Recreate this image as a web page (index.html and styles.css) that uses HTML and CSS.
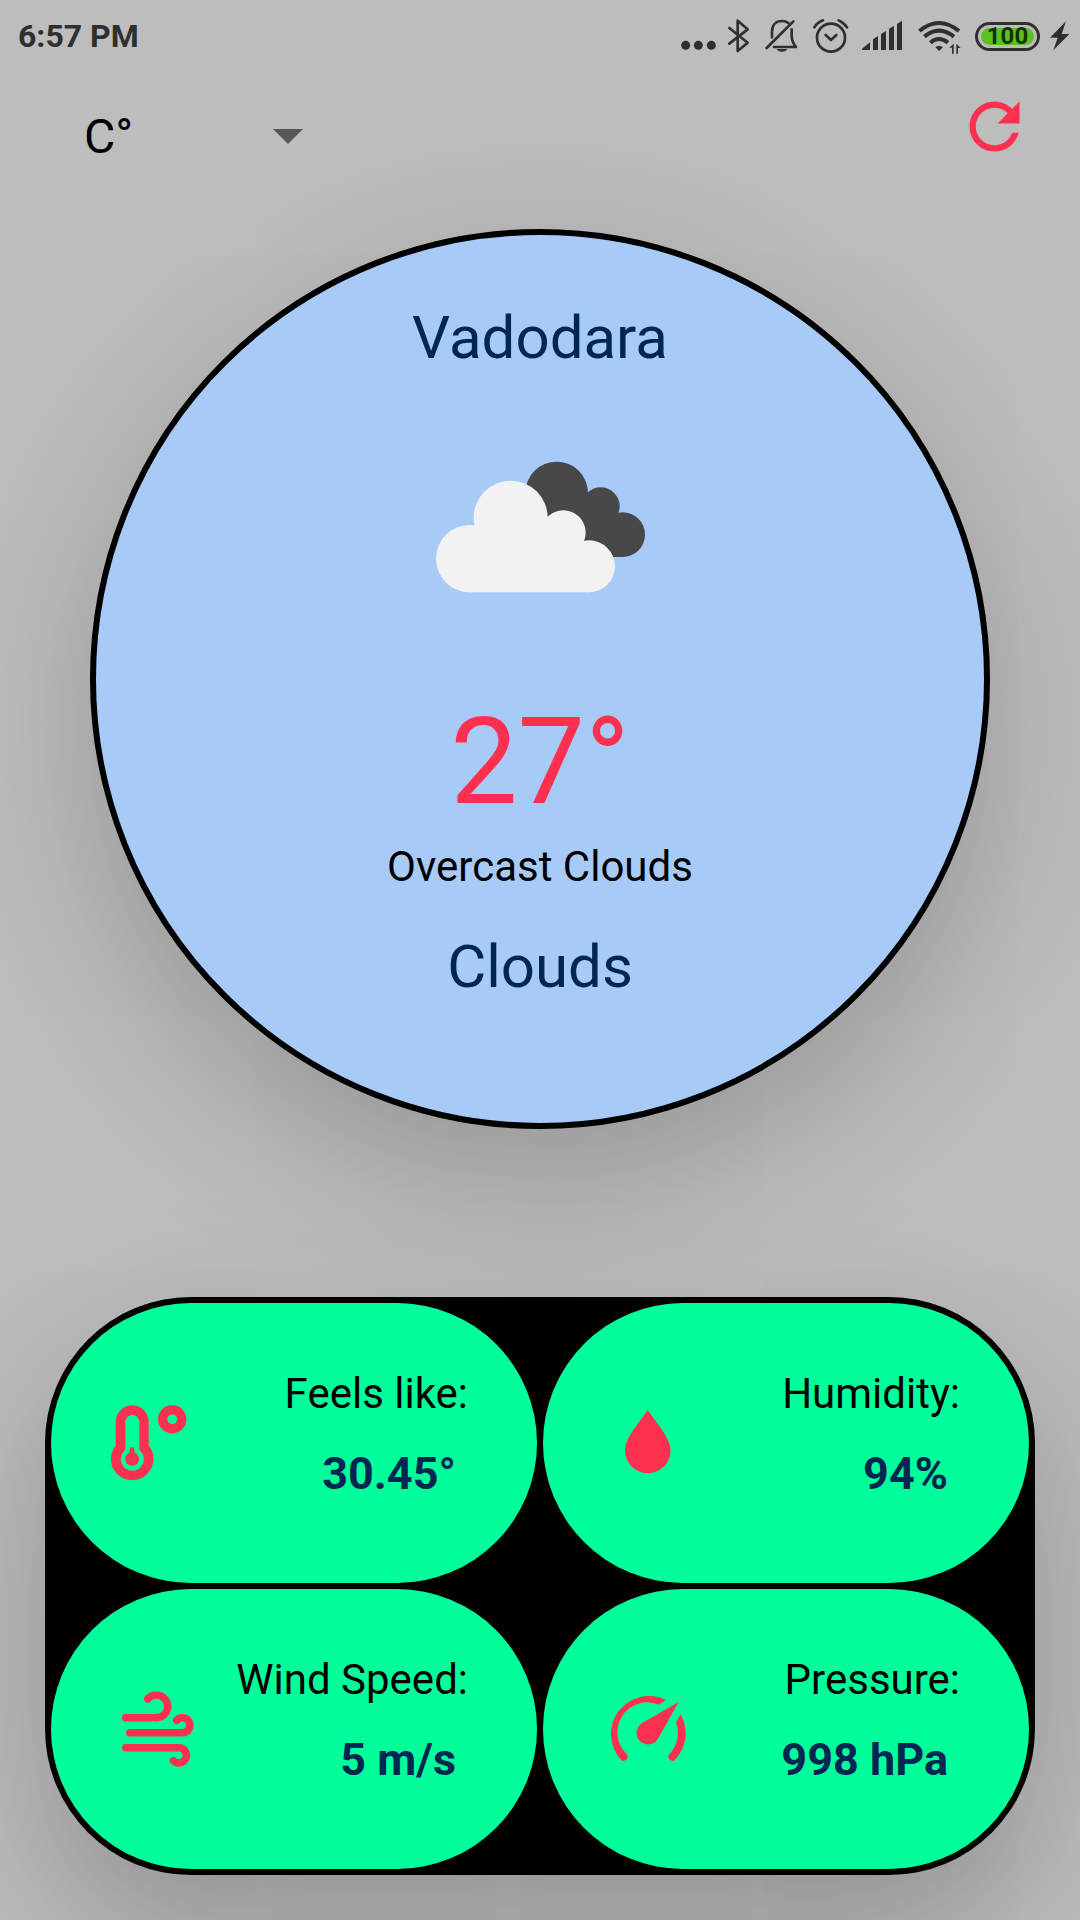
FILE: index.html
```html
<!DOCTYPE html>
<html lang="en">
<head>
<meta charset="utf-8">
<meta name="viewport" content="width=device-width, initial-scale=1">
<title>Weather</title>
<link rel="stylesheet" href="styles.css">
</head>
<body>
<header class="status-bar">
  <time class="clock">6:57 PM</time>
  <div class="status-icons">
    <svg width="42" height="40" viewBox="60 48 126 120" aria-hidden="true"><circle cx="77" cy="136" r="13.500"/><circle cx="115" cy="136" r="13.500"/><circle cx="154" cy="136" r="13.500"/></svg>
    <svg class="line" width="36" height="40" viewBox="186 48 108 120" aria-hidden="true"><path d="M208 84L263 128L233 153V62L263 88L208 131"/></svg>
    <svg class="line" width="47" height="40" viewBox="294 48 141 120" aria-hidden="true"><path d="M400 64L320 144"/><path d="M336 112V95C336 75 348 63 366 63C374 63 380 65 385 69M395 88V108C395 120 400 131 408 141H342"/><path class="solid" d="M350 147H382C378 158 354 158 350 147Z"/></svg>
    <svg class="line" width="50" height="40" viewBox="435 48 150 120" aria-hidden="true"><circle cx="513" cy="113" r="42"/><path d="M497 105L513 120L529 105M463 82Q471 69 489 61M561 82Q553 69 536 61"/></svg>
    <svg width="55" height="40" viewBox="585 48 165 120" aria-hidden="true"><path d="M606 150V146L630 127V150ZM639 150V118L654 108V150ZM663 150V102L678 93V150ZM687 150V86L702 77V150ZM711 150V72L726 62V150Z"/></svg>
    <svg width="58" height="40" viewBox="750 48 174 120" aria-hidden="true"><path class="wifi" d="M778 93Q837 45 897 93M793 110Q837 74 882 110M811 128Q837 106 864 128"/><path d="M826 142Q837 132 849 142L837 153ZM876 161V143H868L881 131V161ZM889 161V131L902 144H894V161Z"/></svg>
    <span class="battery"><span class="battery-level">100</span></span>
    <svg width="25" height="40" viewBox="1155 48 75 120" aria-hidden="true"><path d="M1218 64L1170 113H1193L1180 151L1228 102H1205Z"/></svg>
  </div>
</header>

<div class="toolbar">
  <label class="unit">
    <select class="unit-select" aria-label="Temperature unit">
      <option>C°</option>
      <option>F°</option>
    </select>
    <svg class="unit-arrow" width="30" height="15" viewBox="0 0 30 15" aria-hidden="true"><path d="M0 0H30L15 15Z"/></svg>
  </label>
  <button class="refresh" type="button" aria-label="Refresh">
    <svg width="75" height="75" viewBox="0 0 24 24" aria-hidden="true"><path d="M17.650 6.350C16.200 4.900 14.210 4 12 4c-4.420 0-7.990 3.580-7.990 8s3.570 8 7.990 8c3.730 0 6.840-2.550 7.730-6h-2.080c-.820 2.330-3.040 4-5.650 4-3.310 0-6-2.690-6-6s2.690-6 6-6c1.660 0 3.140.690 4.220 1.780L13 11h7V4l-2.350 2.350z"/></svg>
  </button>
</div>

<main>
  <section class="current">
    <h1 class="place">Vadodara</h1>
    <svg class="cloud" width="210" height="132" viewBox="165 512 630 396" role="img" aria-label="Overcast clouds">
      <g fill="#48484a"><circle cx="530" cy="608" r="94"/><circle cx="662" cy="648" r="57"/><circle cx="728" cy="733" r="67"/><path d="M530 608L662 620L728 733V800H600Z"/></g>
      <g fill="#f2f2f2"><circle cx="392" cy="682" r="111"/><circle cx="269" cy="805" r="101"/><circle cx="550" cy="727" r="67"/><circle cx="627" cy="828" r="78"/><path d="M269 906V750L392 670L550 700L627 800V906Z"/></g>
    </svg>
    <p class="temperature">27°</p>
    <p class="description">Overcast Clouds</p>
    <p class="condition">Clouds</p>
  </section>

  <section class="details">
    <article class="card">
      <svg class="card-icon" viewBox="0 0 90 90" aria-hidden="true"><path fill-rule="evenodd" d="M4.700 23.800A16.500 16.500 0 0 1 37.700 23.800V47.500A21.300 21.300 0 1 1 4.700 47.500ZM14.300 24A7 7 0 0 1 28.300 24V52A11.500 11.500 0 1 1 14.300 52Z"/><path d="M18.700 51.500A2.400 2.400 0 0 1 23.500 51.500V54.500A7 7 0 1 1 18.700 54.500Z"/><path fill-rule="evenodd" d="M47 21.300a14.200 14.200 0 1 1 28.400 0a14.200 14.200 0 1 1-28.400 0ZM56.300 21.300a4.900 4.900 0 1 0 9.800 0a4.900 4.900 0 1 0-9.800 0Z"/></svg>
      <dl class="reading"><dt>Feels like:</dt><dd>30.45°</dd></dl>
    </article>
    <article class="card">
      <svg class="card-icon" viewBox="0 0 90 90" aria-hidden="true"><path d="M44.700 12C36 25 22 40 22 52.500A22.800 22.800 0 0 0 67.600 52.500C67.600 40 53.500 25 44.700 12Z"/></svg>
      <dl class="reading"><dt>Humidity:</dt><dd>94%</dd></dl>
    </article>
    <article class="card">
      <svg class="card-icon wind" viewBox="0 0 90 90" aria-hidden="true"><path d="M14.700 33.700H45A11.350 11.350 0 1 0 36.700 15M18.700 48.700H71.500A7.500 7.500 0 1 0 65.700 36.300M14.700 63.700H67.700A7.650 7.650 0 1 1 62.300 76.700"/></svg>
      <dl class="reading"><dt>Wind Speed:</dt><dd>5 m/s</dd></dl>
    </article>
    <article class="card">
      <svg class="card-icon" viewBox="0 0 90 90" aria-hidden="true"><path d="M63 16A38 38 0 0 0 18 75.700A4 4 0 0 0 23.700 70.100A30 30 0 0 1 56 20.700ZM77.500 30.300A38 38 0 0 1 72 75.700A4 4 0 0 1 66.300 70.100A30 30 0 0 0 73 38.300Z"/><path d="M75.700 18L55.400 54A11.500 11.500 0 1 1 40 38.600Z"/></svg>
      <dl class="reading"><dt>Pressure:</dt><dd>998 hPa</dd></dl>
    </article>
  </section>
</main>
</body>
</html>
```
FILE: styles.css
```css
:root {
  --accent: #ff304f;
  --navy: #002651;
  --sky: #a8caf7;
  --mint: #00ff9b;
  --status: #2f2f2f;
}

* { box-sizing: border-box; }

body {
  margin: 0;
  min-height: 100vh;
  overflow-x: hidden;
  background: #bdbdbd;
  color: #000;
  font-family: Roboto, "Liberation Sans", sans-serif;
}

svg { display: block; flex: none; }

h1, p, dl, dd { margin: 0; }

.status-bar {
  display: flex;
  align-items: center;
  justify-content: space-between;
  height: 72px;
  padding: 0 10px 0 18px;
  color: var(--status);
}

.clock { font-size: 32px; font-weight: 700; }

.status-icons { display: flex; align-items: center; fill: currentColor; }

.line {
  fill: none;
  stroke: currentColor;
  stroke-width: 8;
  stroke-linecap: round;
  stroke-linejoin: round;
}

.line .solid { fill: currentColor; stroke: none; }

.wifi { fill: none; stroke: currentColor; stroke-width: 12; }

.battery {
  width: 65px;
  height: 29px;
  margin: 0 5px 0 7px;
  padding: 3px;
  border: 3px solid var(--status);
  border-radius: 15px;
}

.battery-level {
  display: block;
  border-radius: 9px;
  background: #5dc21e;
  color: #17300a;
  font-size: 24px;
  font-weight: 700;
  line-height: 17px;
  text-align: center;
}

.toolbar {
  display: flex;
  align-items: flex-start;
  justify-content: space-between;
  padding: 17px 48px 46px 84px;
}

.unit { display: grid; width: 219px; }

.unit-select {
  grid-area: 1 / 1;
  height: 94px;
  padding: 0;
  border: 0;
  appearance: none;
  background: transparent;
  color: #000;
  font: 48px Roboto, "Liberation Sans", sans-serif;
}

.unit-arrow {
  grid-area: 1 / 1;
  place-self: center end;
  fill: #585858;
  pointer-events: none;
}

.refresh {
  padding: 0;
  border: 0;
  background: none;
  fill: var(--accent);
  cursor: pointer;
}

.current {
  display: flex;
  flex-direction: column;
  align-items: center;
  max-width: 900px;
  aspect-ratio: 1;
  margin: 0 auto;
  padding-top: 68px;
  border: 6px solid #000;
  border-radius: 50%;
  background: var(--sky);
  box-shadow: 0 50px 160px rgb(0 0 0 / 21%);
}

.place, .condition {
  color: var(--navy);
  font-size: 60px;
  font-weight: 400;
  line-height: 70px;
}

.cloud { margin: 88px 0 99px; }

.temperature { color: var(--accent); font-size: 120px; line-height: 140px; }

.description { margin: 10px 0 40px; font-size: 42px; line-height: 50px; }

.details {
  display: grid;
  grid-template-columns: repeat(auto-fit, minmax(400px, 1fr));
  gap: 6px;
  margin: 168px 45px 45px;
  padding: 6px;
  border-radius: 146px;
  background: #000;
  box-shadow: 0 60px 160px rgb(0 0 0 / 24%);
}

.card {
  display: flex;
  align-items: center;
  justify-content: space-between;
  height: 280px;
  padding: 0 69px 0 60px;
  border-radius: 140px;
  background: var(--mint);
}

.card-icon { width: 90px; height: 90px; fill: var(--accent); }

.wind {
  fill: none;
  stroke: var(--accent);
  stroke-width: 7.500;
  stroke-linecap: round;
}

.reading { padding-bottom: 16px; text-align: right; }

.reading dt { font-size: 42px; line-height: 50px; }

.reading dd {
  margin-top: 28px;
  padding-right: 12px;
  color: var(--navy);
  font-size: 45px;
  font-weight: 700;
  line-height: 54px;
}
```
